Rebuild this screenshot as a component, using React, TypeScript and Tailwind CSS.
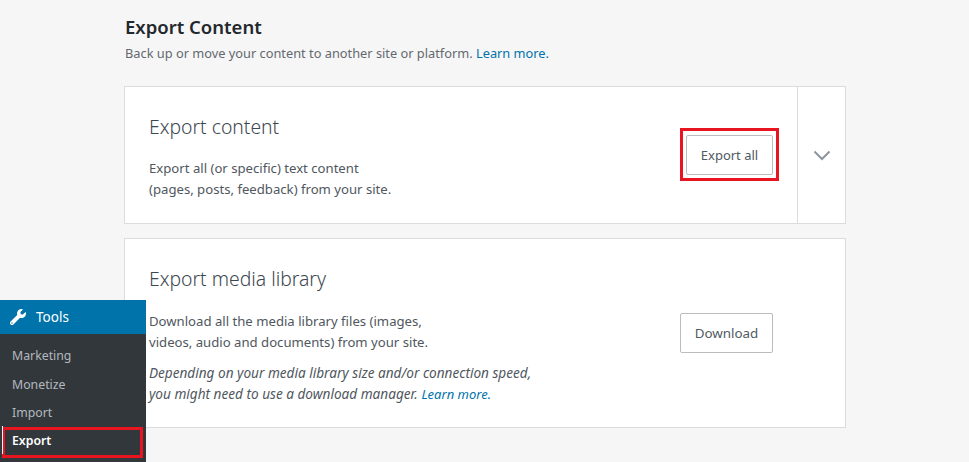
import { FaWrench } from 'react-icons/fa';

function Sidebar() {
  return (
    <aside className="absolute bottom-0 left-0 h-[162px] w-[146px] bg-[#32373c]">
      <div className="flex h-[34px] items-center gap-[10px] bg-[#0073aa] pl-[10px] text-[13.5px] text-white">
        <FaWrench className="h-[16px] w-[16px]" />
        <span>Tools</span>
      </div>
      <ul className="pt-[8px] text-[12.3px] text-[#b4b9be]">
        <li className="flex h-[29px] items-center pl-[12px]">Marketing</li>
        <li className="flex h-[28px] items-center pl-[12px]">Monetize</li>
        <li className="flex h-[28px] items-center pl-[12px]">Import</li>
        <li className="flex h-[28px] items-center pl-[12px] font-semibold text-white">Export</li>
      </ul>
      <div className="absolute left-[2px] top-[127px] h-[31px] w-[141px] border-[3px] border-[#e8141f]" />
      <div className="absolute left-[2px] top-[126px] h-[28px] w-px bg-white" />
    </aside>
  );
}

export default function App() {
  return (
    <div className="relative h-[462px] w-[969px] overflow-hidden bg-[#f6f6f6] font-['Noto_Sans',sans-serif]">
      <main className="ml-[124px] w-[722px]">
        <header className="pl-[1px] pt-[14px]">
          <h1 className="text-[18.5px] font-semibold leading-[26px] text-[#23282d]">Export Content</h1>
          <p className="mt-[1px] text-[12.8px] leading-[24px] text-[#646970]">
            Back up or move your content to another site or platform.{' '}
            <a className="text-[#0073aa]">Learn more.</a>
          </p>
        </header>

        <section className="mt-[21px] flex h-[138px] border border-[#dcdcde] bg-white">
          <div className="flex flex-1 items-center justify-between pl-[24px] pr-[24px]">
            <div className="mt-[4px]">
              <h2 className="text-[19.35px] font-light leading-[26px] text-[#3d474f]">Export content</h2>
              <p className="mt-[18px] text-[13.15px] leading-[21px] text-[#50575e]">
                Export all (or specific) text content
                <br />
                (pages, posts, feedback) from your site.
              </p>
            </div>
            <div className="-mr-[6px] -mt-[1px] w-[99px] border-[3px] border-[#e8141f] px-[3px] pb-[3px] pt-[4px]">
              <button className="h-[40px] w-full rounded-[2px] border border-[#b9bdc0] bg-white pt-[1px] text-[13px] text-[#4f5a62]">
                Export all
              </button>
            </div>
          </div>
          <div className="flex w-[48px] items-center justify-center border-l border-[#dcdcde]">
            <svg width="18" height="11" viewBox="0 0 18 11" fill="none" stroke="#8d96a0" strokeWidth="2">
              <path d="M1.5 1.5 9 9l7.5-7.5" />
            </svg>
          </div>
        </section>

        <section className="mt-[14px] flex h-[190px] items-start justify-between border border-[#dcdcde] bg-white pl-[24px] pr-[72px] pt-[27px]">
          <div>
            <h2 className="text-[19.35px] font-light leading-[26px] text-[#3d474f]">Export media library</h2>
            <p className="mt-[19px] text-[13.15px] leading-[21px] text-[#50575e]">
              Download all the media library files (images,
              <br />
              videos, audio and documents) from your site.
            </p>
            <p className="mt-[9px] text-[13.6px] italic leading-[21px] text-[#50575e]">
              Depending on your media library size and/or connection speed,
              <br />
              you might need to use a download manager.{' '}
              <a className="text-[13px] text-[#0073aa]">Learn more.</a>
            </p>
          </div>
          <div className="mt-[47px] w-[93px]">
            <button className="h-[40px] w-full rounded-[2px] border border-[#b9bdc0] bg-white text-[13.4px] text-[#4f5a62]">
              Download
            </button>
          </div>
        </section>
      </main>
      <Sidebar />
    </div>
  );
}
